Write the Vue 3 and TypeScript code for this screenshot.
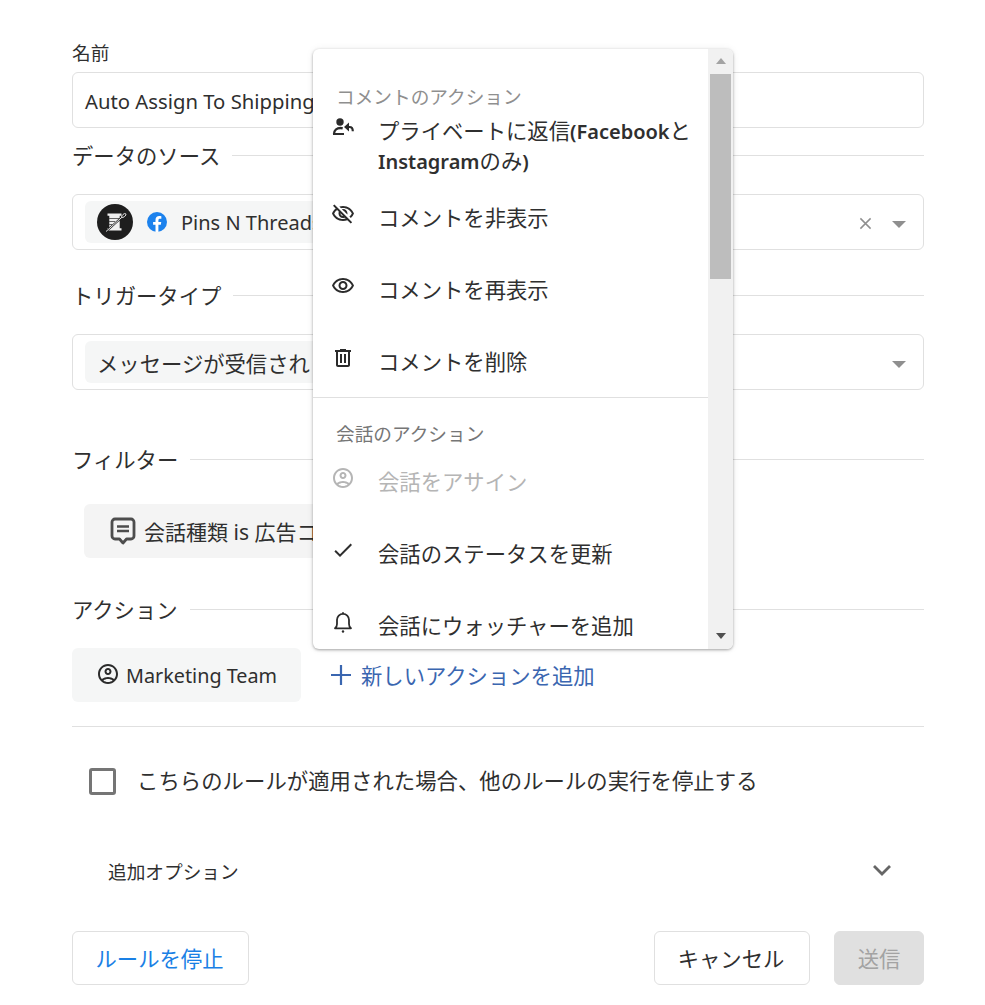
<script setup lang="ts">
interface MenuItem {
  label: string
  icon: string
  muted?: boolean
}

const commentItems: MenuItem[] = [
  { label: 'コメントを非表示', icon: 'M12 6c3.79 0 7.17 2.13 8.82 5.5-.59 1.22-1.42 2.27-2.41 3.12l1.41 1.41c1.39-1.23 2.49-2.77 3.18-4.53C21.27 7.11 17 4 12 4c-1.27 0-2.49.2-3.64.57l1.65 1.65C10.66 6.09 11.32 6 12 6zm-1.07 1.14L13 9.21c.57.25 1.03.71 1.28 1.28l2.07 2.07c.08-.34.14-.7.14-1.07C16.5 9.01 14.48 7 12 7c-.37 0-.72.05-1.07.14zM2.01 3.87l2.68 2.68C3.06 7.83 1.77 9.53 1 11.5 2.73 15.89 7 19 12 19c1.52 0 2.98-.29 4.32-.82l3.42 3.42 1.41-1.41L3.42 2.45 2.01 3.87zm7.5 7.5l2.61 2.61c-.04.01-.08.02-.12.02-1.38 0-2.5-1.12-2.5-2.5 0-.05.01-.08.01-.13zm-3.4-3.4l1.75 1.75c-.23.55-.36 1.15-.36 1.78 0 2.48 2.02 4.5 4.5 4.5.63 0 1.23-.13 1.77-.36l.98.98c-.88.24-1.8.38-2.75.38-3.79 0-7.17-2.13-8.82-5.5.7-1.43 1.72-2.61 2.93-3.53z' },
  { label: 'コメントを再表示', icon: 'M12 6c3.79 0 7.17 2.13 8.82 5.5C19.17 14.87 15.79 17 12 17s-7.17-2.13-8.82-5.5C4.83 8.13 8.21 6 12 6m0-2C7 4 2.73 7.11 1 11.5 2.73 15.89 7 19 12 19s9.27-3.11 11-7.5C21.27 7.11 17 4 12 4zm0 5c1.38 0 2.5 1.12 2.5 2.5S13.38 14 12 14s-2.5-1.12-2.5-2.5S10.62 9 12 9m0-2c-2.48 0-4.5 2.02-4.5 4.5S9.52 16 12 16s4.5-2.02 4.5-4.5S14.48 7 12 7z' },
  { label: 'コメントを削除', icon: 'M15 4V3H9v1H4v2h1v13c0 1.1.9 2 2 2h10c1.1 0 2-.9 2-2V6h1V4h-5zm2 15H7V6h10v13zM9 8h2v9H9zm4 0h2v9h-2z' },
]

const personCircle = 'M12 2C6.48 2 2 6.48 2 12s4.48 10 10 10 10-4.48 10-10S17.52 2 12 2zM7.35 18.5C8.66 17.56 10.26 17 12 17s3.34.56 4.65 1.5c-1.31.94-2.91 1.5-4.65 1.5s-3.34-.56-4.65-1.5zm10.79-1.38C16.45 15.8 14.32 15 12 15s-4.45.8-6.14 2.12C4.7 15.73 4 13.95 4 12c0-4.42 3.58-8 8-8s8 3.58 8 8c0 1.95-.7 3.73-1.86 5.12zM12 6c-1.93 0-3.5 1.57-3.5 3.5S10.07 13 12 13s3.5-1.57 3.5-3.5S13.93 6 12 6zm0 5c-.83 0-1.5-.67-1.5-1.5S11.17 8 12 8s1.5.67 1.5 1.5S12.83 11 12 11z'

const chatItems: MenuItem[] = [
  { label: '会話をアサイン', icon: personCircle, muted: true },
  { label: '会話のステータスを更新', icon: 'M9 16.17L4.83 12l-1.42 1.41L9 19 21 7l-1.41-1.41z' },
]
</script>

<template>
  <div class="page">
    <label class="field-label">名前</label>
    <div class="box name-box">Auto Assign To Shipping</div>

    <div class="section-head first"><span>データのソース</span><i></i></div>
    <div class="box select-box">
      <div class="tag">
        <svg class="spool" viewBox="0 0 36 36" aria-hidden="true">
          <circle cx="18" cy="18" r="18" fill="#1e1e1e" />
          <path d="M10.500 9.500h14v2.300h-1.800v12.400h1.800v2.300h-14v-2.300h1.800V11.800h-1.800z" fill="#f0f0f0" />
          <path d="M12 14.500h10M12 17.500h6M12 20.500h3" stroke="#555" stroke-width=".9" />
          <path d="M9 27.500 28 10.500" stroke="#1e1e1e" stroke-width="2" />
          <path d="M9 27.500 25 13.200" stroke="#e4e4e4" stroke-width="1" />
          <ellipse cx="26.800" cy="11.500" rx="2.600" ry="1.300" transform="rotate(-40 26.800 11.500)" fill="none" stroke="#e4e4e4" stroke-width=".9" />
        </svg>
        <svg class="fb" viewBox="0 0 20 20" aria-hidden="true">
          <circle cx="10" cy="10" r="10" fill="#1c82ed" />
          <path d="M11.400 20v-7.200h2.400l.45-2.900H11.400V8.200c0-.85.4-1.500 1.600-1.500h1.350V4.200c-.6-.1-1.300-.2-2.050-.2-2.350 0-3.800 1.400-3.800 3.900v2H6.100v2.900h2.400V20z" fill="#fff" />
        </svg>
        <span class="tag-text">Pins N Threads</span>
      </div>
      <div class="select-icons">
        <svg class="clear" viewBox="0 0 14 14" aria-hidden="true"><path d="M1.500 1.500l11 11M12.500 1.500l-11 11" stroke="#8f8f8f" stroke-width="1.600" /></svg>
        <span class="caret"></span>
      </div>
    </div>

    <div class="section-head"><span>トリガータイプ</span><i></i></div>
    <div class="box select-box">
      <div class="tag trigger-tag">メッセージが受信されました</div>
      <div class="select-icons"><span class="caret"></span></div>
    </div>

    <div class="section-head filter-head"><span>フィルター</span><i></i></div>
    <div class="filter-chip">
      <svg class="chat-icon" viewBox="0 0 26 28" aria-hidden="true">
        <path d="M5 2h16a3 3 0 0 1 3 3v14a3 3 0 0 1-3 3h-4.500L13 26l-3.500-4H5a3 3 0 0 1-3-3V5a3 3 0 0 1 3-3z" fill="none" stroke="#4d4d4d" stroke-width="2.800" stroke-linejoin="round" />
        <path d="M7 9.500h12M7 14h12" stroke="#4d4d4d" stroke-width="2.400" />
      </svg>
      <span>会話種類 is 広告コメント</span>
    </div>

    <div class="section-head action-head"><span>アクション</span><i></i></div>
    <div class="action-row">
      <div class="action-chip">
        <svg class="team-icon" viewBox="0 0 24 24" aria-hidden="true"><path :d="personCircle" fill="#2b2b2b" /></svg>
        <span>Marketing Team</span>
      </div>
      <a class="add-link">
        <svg viewBox="0 0 22 22" aria-hidden="true"><path d="M11 1v20M1 11h20" stroke="#3a66b0" stroke-width="2.200" /></svg>
        <span class="add-text">新しいアクションを追加</span>
      </a>
    </div>

    <hr class="divider" />

    <div class="check-row">
      <span class="checkbox"></span>
      <span class="check-text">こちらのルールが適用された場合、他のルールの実行を停止する</span>
    </div>

    <div class="options-row">
      <span class="options-text">追加オプション</span>
      <svg viewBox="0 0 20 12" aria-hidden="true"><path d="M2 2l8 8 8-8" fill="none" stroke="#666" stroke-width="2.800" /></svg>
    </div>

    <div class="footer">
      <button class="btn stop">ルールを停止</button>
      <div class="footer-right">
        <button class="btn cancel">キャンセル</button>
        <button class="btn submit">送信</button>
      </div>
    </div>

    <div class="menu">
      <div class="menu-list">
        <div class="menu-title">コメントのアクション</div>
        <div class="menu-item reply-item">
          <svg class="menu-icon" viewBox="0 0 24 24" aria-hidden="true">
            <circle cx="9" cy="7" r="3.700" fill="#2b2b2b" />
            <path d="M3 19c0-3.600 2.800-6 6.500-6 .8 0 1.500.1 2.200.3" fill="none" stroke="#2b2b2b" stroke-width="2.300" />
            <path d="M2 19h11" stroke="#2b2b2b" stroke-width="2.200" />
            <path d="M18 7.500l-5 4.500 5 4.500z" fill="#2b2b2b" />
            <path d="M16 12h2.500c2.200 0 3.300 1.700 3.300 4.200" fill="none" stroke="#2b2b2b" stroke-width="2.200" />
          </svg>
          <span class="menu-text">プライベートに返信<b>(Facebook</b>と<b>Instagram</b>のみ<b>)</b></span>
        </div>
        <div v-for="item in commentItems" :key="item.label" class="menu-item">
          <svg class="menu-icon" viewBox="0 0 24 24" aria-hidden="true"><path :d="item.icon" fill="#2b2b2b" /></svg>
          <span class="menu-text">{{ item.label }}</span>
        </div>
        <div class="menu-sep"></div>
        <div class="menu-title second">会話のアクション</div>
        <div v-for="item in chatItems" :key="item.label" class="menu-item" :class="{ muted: item.muted }">
          <svg class="menu-icon" viewBox="0 0 24 24" aria-hidden="true"><path :d="item.icon" fill="currentColor" /></svg>
          <span class="menu-text">{{ item.label }}</span>
        </div>
        <div class="menu-item">
          <svg class="menu-icon" viewBox="0 0 24 24" aria-hidden="true">
            <path d="M4 18.300c1.400-.9 2-2.200 2-4.300V9.800a6 6 0 0 1 12 0V14c0 2.100.6 3.400 2 4.300z" fill="none" stroke="#2b2b2b" stroke-width="1.800" stroke-linejoin="round" />
            <path d="M12 2.300v1.500" stroke="#2b2b2b" stroke-width="1.800" />
            <circle cx="12" cy="21.500" r="1.200" fill="#2b2b2b" />
          </svg>
          <span class="menu-text">会話にウォッチャーを追加</span>
        </div>
      </div>
      <div class="scrollbar">
        <span class="arrow up"></span>
        <span class="thumb"></span>
        <span class="arrow down"></span>
      </div>
    </div>
  </div>
</template>

<style scoped>
.page {
  position: relative;
  box-sizing: border-box;
  width: 985px;
  height: 1005px;
  padding: 40px 61px 0 72px;
  overflow: hidden;
  background: #fff;
  color: #2f2f2f;
  font-family: "Noto Sans", "Noto Sans CJK JP", sans-serif;
  font-size: 21.33px;
}
.field-label {
  display: block;
  height: 26px;
  margin-bottom: 6px;
  font-size: 18.67px;
  line-height: 26px;
}
.box {
  box-sizing: border-box;
  height: 56px;
  border: 1px solid #e0e0e0;
  border-radius: 6px;
  background: #fff;
}
.name-box {
  padding: 0 12px;
  line-height: 56px;
  font-size: 20.3px;
  white-space: nowrap;
  overflow: hidden;
}
.section-head {
  display: flex;
  align-items: center;
  gap: 12px;
  height: 30px;
  margin: 30px 0 24px;
  line-height: 30px;
}
.section-head span { margin-top: 2px; }
.section-head i {
  flex: 1;
  height: 1px;
  background: #e0e0e0;
}
.section-head.first { margin-top: 12px; }
.section-head.filter-head { margin: 54px 0 30px; }
.section-head.action-head { margin: 36px 0 24px; }
.select-box {
  display: flex;
  align-items: center;
  justify-content: space-between;
  padding: 0 17px 0 12px;
}
.tag {
  display: flex;
  align-items: center;
  height: 42px;
  padding: 0 12px;
  border-radius: 6px;
  background: #f5f6f6;
  font-size: 20px;
  white-space: nowrap;
}
.tag-text { margin-left: 14px; }
.trigger-tag { font-size: 21.33px; }
.spool { width: 36px; height: 36px; }
.fb { width: 20px; height: 20px; margin-left: 14px; }
.select-icons {
  display: flex;
  align-items: center;
  gap: 20px;
  margin-top: 2px;
}
.clear { width: 13px; height: 13px; }
.caret {
  width: 0;
  height: 0;
  border-left: 7px solid transparent;
  border-right: 7px solid transparent;
  border-top: 7px solid #8f8f8f;
  margin-top: 2px;
}
.filter-chip {
  display: inline-flex;
  align-items: center;
  gap: 8px;
  box-sizing: border-box;
  height: 54px;
  margin-left: 12px;
  padding: 0 24px 0 26px;
  border-radius: 6px;
  background: #f4f4f4;
  font-size: 21px;
  vertical-align: top;
}
.chat-icon { width: 26px; height: 28px; }
.action-row {
  display: flex;
  align-items: center;
  gap: 29px;
}
.action-chip {
  display: flex;
  align-items: center;
  gap: 6px;
  box-sizing: border-box;
  width: 229px;
  height: 54px;
  padding-left: 25px;
  border-radius: 6px;
  background: #f5f6f6;
  font-size: 19.8px;
}
.team-icon { width: 24px; height: 24px; margin-left: -1px; margin-top: -2px; }
.add-link {
  display: flex;
  align-items: center;
  gap: 9px;
  color: #3a66b0;
}
.add-link svg { width: 22px; height: 22px; }
.add-text { margin-top: -2px; }
.divider {
  height: 1px;
  margin: 24px 0 0;
  border: 0;
  background: #e0e0e0;
}
.check-row {
  display: flex;
  align-items: center;
  gap: 22px;
  height: 54px;
  margin-top: 27px;
  padding-left: 17px;
}
.check-text { margin: -3px 0 0 -1px; letter-spacing: 0.07px; }
.checkbox {
  box-sizing: border-box;
  width: 27px;
  height: 27px;
  border: 3px solid #757575;
  border-radius: 3px;
}
.options-row {
  display: flex;
  align-items: center;
  justify-content: space-between;
  height: 30px;
  margin-top: 48px;
  padding: 0 32px 0 36px;
  font-size: 18.67px;
}
.options-text { margin-top: -2px; }
.options-row svg { width: 20px; height: 12px; margin-top: -2px; }
.footer {
  display: flex;
  justify-content: space-between;
  margin-top: 45px;
}
.footer-right {
  display: flex;
  gap: 24px;
}
.btn {
  box-sizing: border-box;
  height: 54px;
  padding: 0 0 2px;
  border: 1px solid #e0e0e0;
  border-radius: 6px;
  background: #fff;
  color: #2f2f2f;
  font: inherit;
}
.stop { width: 177px; padding-right: 2px; color: #1a80e5; }
.cancel { width: 156px; padding-right: 2px; }
.submit {
  width: 90px;
  border-color: #e0e0e0;
  background: #e0e0e0;
  color: #a3a3a3;
}
.menu {
  position: absolute;
  left: 313px;
  top: 49px;
  display: flex;
  width: 420px;
  height: 600px;
  overflow: hidden;
  border-radius: 6px;
  background: #fff;
  box-shadow: 0 1px 3px rgba(0, 0, 0, 0.35), 0 0 8px rgba(0, 0, 0, 0.06);
}
.menu-list {
  flex: 1;
  min-width: 0;
  padding-top: 36px;
}
.menu-title {
  height: 24px;
  padding-left: 23px;
  color: #8f8f8f;
  font-size: 18.67px;
  line-height: 24px;
}
.menu-title.second {
  margin-top: 24px;
  color: #767676;
}
.menu-item {
  display: flex;
  gap: 24px;
  padding: 21px 10px 21px 18px;
  line-height: 30px;
  color: #2f2f2f;
}
.menu-text { margin-left: -1px; }
.menu-item.reply-item {
  padding-top: 7px;
  padding-bottom: 6px;
}
.menu-item.muted { color: #b5b5b5; }
.menu-icon {
  flex: none;
  width: 24px;
  height: 24px;
  margin-top: -1px;
}
.menu-text b {
  font-size: 20px;
  font-weight: 600;
  line-height: 0;
}
.menu-sep {
  height: 1px;
  background: #e0e0e0;
  margin-top: -1px;
}
.scrollbar {
  position: relative;
  display: flex;
  flex-direction: column;
  align-items: center;
  flex: none;
  width: 25px;
  background: #f1f1f1;
}
.thumb {
  position: absolute;
  top: 25px;
  left: 2px;
  width: 21px;
  height: 205px;
  background: #bdbdbd;
}
.arrow {
  position: absolute;
  width: 0;
  height: 0;
  border-left: 5.500px solid transparent;
  border-right: 5.500px solid transparent;
}
.arrow.up { top: 9px; border-bottom: 6px solid #a3a3a3; }
.arrow.down { bottom: 10px; border-top: 6px solid #505050; }
</style>
